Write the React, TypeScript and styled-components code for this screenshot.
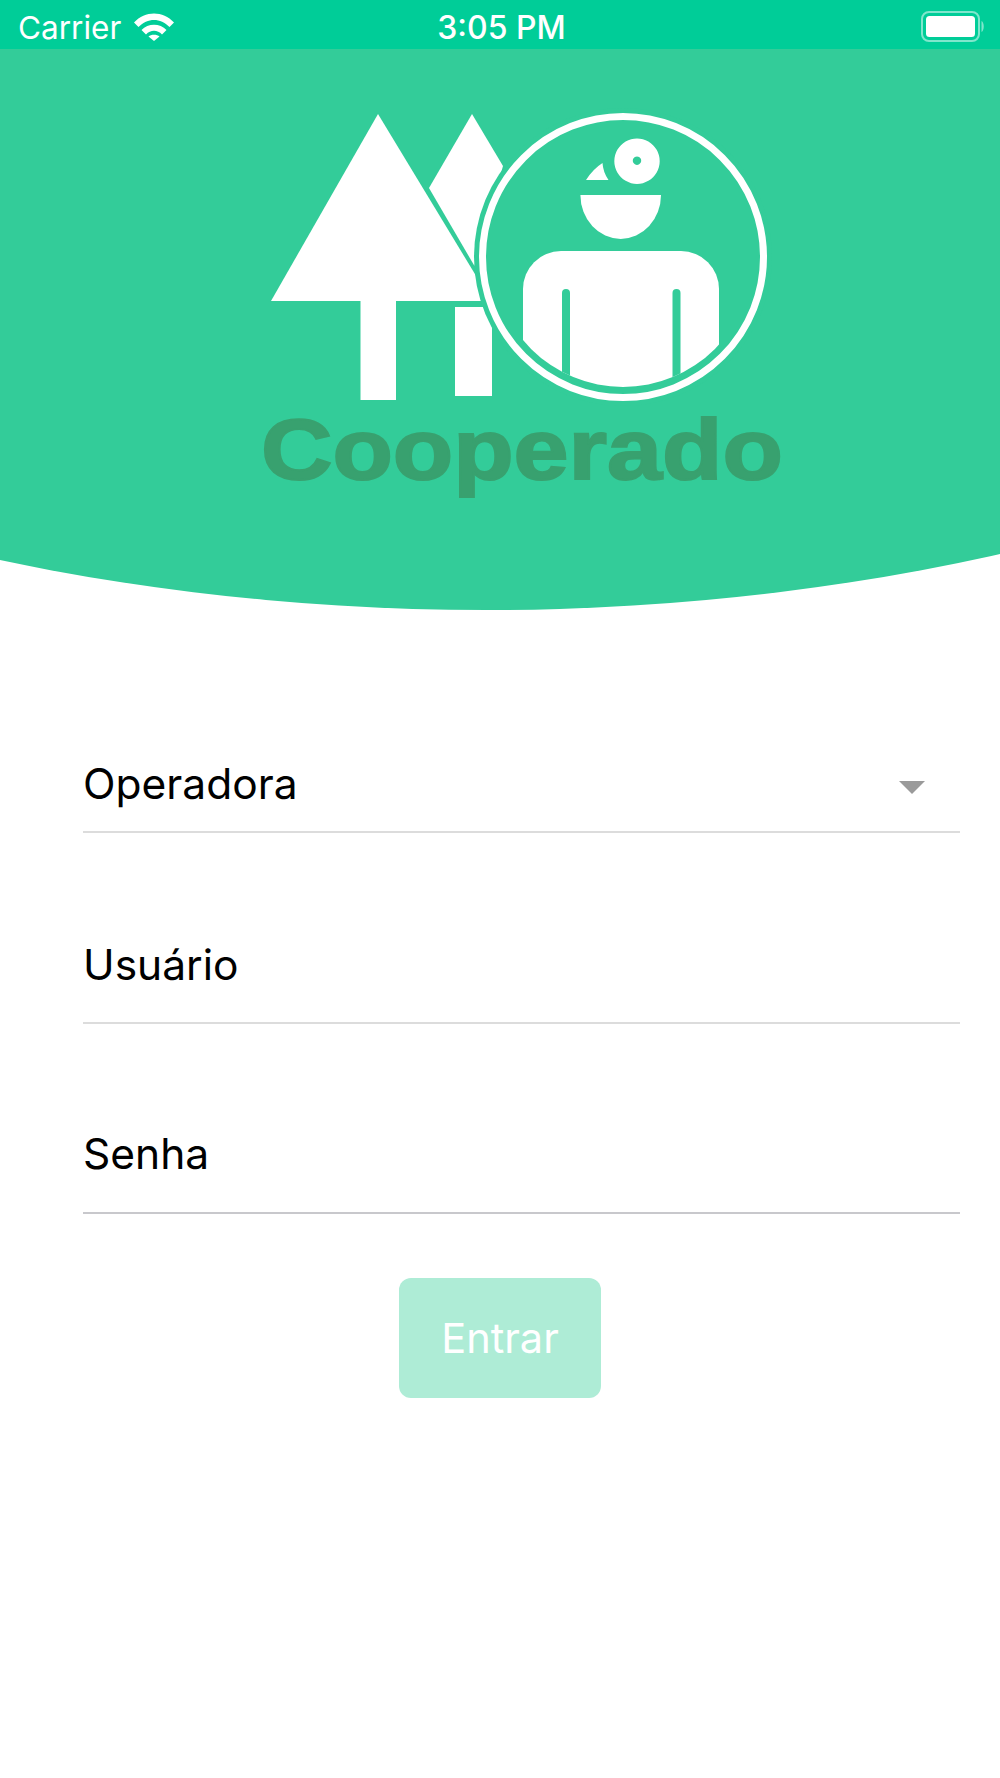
import styled, { createGlobalStyle } from "styled-components";

const GlobalStyle = createGlobalStyle`
  html, body {
    margin: 0;
    padding: 0;
    background: #fff;
  }
  * {
    box-sizing: border-box;
  }
`;

export default function App() {
  return (
    <Page>
      <GlobalStyle />
      <Hero>
        <StatusBar>
          <StatusLeft>
            <StatusText>Carrier</StatusText>
            <WifiIcon />
          </StatusLeft>
          <Clock>3:05 PM</Clock>
          <BatteryIcon />
        </StatusBar>
        <Logo />
      </Hero>
      <Form>
        <Field $height={223} $labelGap={22}>
          <FieldLabel>Operadora</FieldLabel>
          <Caret />
        </Field>
        <Field $height={191} $labelGap={32}>
          <FieldLabel>Usuário</FieldLabel>
        </Field>
        <Field $height={190} $labelGap={33} $dark>
          <FieldLabel>Senha</FieldLabel>
        </Field>
        <SubmitButton type="button">Entrar</SubmitButton>
      </Form>
    </Page>
  );
}

function WifiIcon() {
  return (
    <WifiSvg viewBox="0 0 40 28">
      <path d="M0 9.5C11 -2.5 29 -2.5 40 9.5L35.5 14C26.5 4.5 13.5 4.5 4.5 14Z" fill="#fff" />
      <path d="M7.5 17C14 10 26 10 32.5 17L28 21.5C23.5 16.5 16.5 16.5 12 21.5Z" fill="#fff" />
      <path d="M14.5 23.5C17 21 23 21 25.5 23.5L20 28Z" fill="#fff" />
    </WifiSvg>
  );
}

function BatteryIcon() {
  return (
    <BatterySvg viewBox="0 0 64 31">
      <rect x="1" y="1" width="57" height="29" rx="7" fill="none" stroke="#fff" strokeOpacity="0.5" strokeWidth="2" />
      <rect x="5" y="5" width="49" height="21" rx="3.5" fill="#fff" />
      <path d="M60.5 10C63.5 11.5 63.5 19.5 60.5 21Z" fill="#fff" fillOpacity="0.5" />
    </BatterySvg>
  );
}

function Caret() {
  return (
    <CaretSvg viewBox="0 0 26 13">
      <path d="M0 0H26L13 13Z" fill="#9a9a9a" />
    </CaretSvg>
  );
}

function Logo() {
  return (
    <LogoSvg viewBox="0 0 1000 561">
      <defs>
        <clipPath id="inner-disc">
          <circle cx="623" cy="208" r="130" />
        </clipPath>
      </defs>
      <path d="M472 65L503 117L474.5 217L429 139Z" fill="#fff" />
      <rect x="455" y="258" width="37" height="89" fill="#fff" />
      <path d="M378 65L271 252H490L484 240Z" fill="#fff" />
      <rect x="360.5" y="252" width="35.5" height="99" fill="#fff" />
      <circle cx="623" cy="208" r="149" fill="#33cc99" />
      <circle cx="623" cy="208" r="140.5" fill="none" stroke="#fff" strokeWidth="7" />
      <path d="M637 89.5a22.7 22.7 0 1 0 .01 0Zm0 18a4.2 4.2 0 1 1-.01 0Z" fill="#fff" fillRule="evenodd" />
      <path d="M586 131Q593 120 602.5 114Q603 123 608.5 131Z" fill="#fff" />
      <path d="M580.4 146H661A40.3 44 0 0 1 580.4 146Z" fill="#fff" />
      <g clipPath="url(#inner-disc)">
        <path d="M523 240A38 38 0 0 1 561 202H681A38 38 0 0 1 719 240V360H523Z" fill="#fff" />
        <path d="M562 360V244Q562 240 566 240Q570 240 570 244V360Z" fill="#33cc99" />
        <path d="M672.5 360V244Q672.5 240 676.5 240Q680.5 240 680.5 244V360Z" fill="#33cc99" />
      </g>
      <text
        transform="translate(261 430) scale(1.15 1)"
        fontFamily="'Liberation Sans', Arial, sans-serif"
        fontWeight="700"
        fontSize="86"
        fill="#38a16f"
        stroke="#38a16f"
        strokeWidth="2"
      >
        Cooperado
      </text>
    </LogoSvg>
  );
}

const Page = styled.div`
  width: 1000px;
  height: 1778px;
  overflow: hidden;
  background: #fff;
  font-family: "Inter", "Liberation Sans", sans-serif;
`;

const Hero = styled.header`
  height: 610px;
  background: #33cc99;
  clip-path: ellipse(1500px 925px at 486px -315px);
`;

const StatusBar = styled.div`
  height: 49px;
  padding: 0 15px 0 18px;
  background: #00cd98;
  color: #fff;
  display: grid;
  grid-template-columns: 1fr auto 1fr;
  align-items: center;
`;

const StatusLeft = styled.div`
  display: flex;
  align-items: center;
  gap: 13px;
`;

const StatusText = styled.span`
  padding-top: 3px;
  font-size: 31.5px;
  line-height: 49px;
`;

const Clock = styled(StatusText)`
  font-size: 32px;
  font-weight: 500;
`;

const WifiSvg = styled.svg`
  width: 40px;
  height: 28px;
  display: block;
  margin-top: 2px;
`;

const BatterySvg = styled.svg`
  width: 64px;
  height: 31px;
  display: block;
  justify-self: end;
`;

const LogoSvg = styled.svg`
  width: 1000px;
  height: 561px;
  display: block;
`;

const Form = styled.main`
  padding: 0 40px 0 83px;
  display: flex;
  flex-direction: column;
`;

const Field = styled.div<{ $height: number; $labelGap: number; $dark?: boolean }>`
  height: ${(p) => p.$height}px;
  padding: 0 35px 0 0;
  border-bottom: 2px solid ${(p) => (p.$dark ? "#c8c8cc" : "#dcdcdc")};
  display: flex;
  align-items: flex-end;
  justify-content: space-between;

  & > span {
    padding-bottom: ${(p) => p.$labelGap}px;
  }
`;

const FieldLabel = styled.span`
  font-size: 42.5px;
  line-height: 50px;
  color: #000;
`;

const CaretSvg = styled.svg`
  width: 26px;
  height: 13px;
  display: block;
  margin-bottom: 37px;
`;

const SubmitButton = styled.button`
  width: 202px;
  height: 120px;
  margin: 64px 0 0 316px;
  padding: 0;
  border: 0;
  border-radius: 12px;
  background: #aeecd6;
  color: #fff;
  font-family: inherit;
  font-size: 41.5px;
`;
